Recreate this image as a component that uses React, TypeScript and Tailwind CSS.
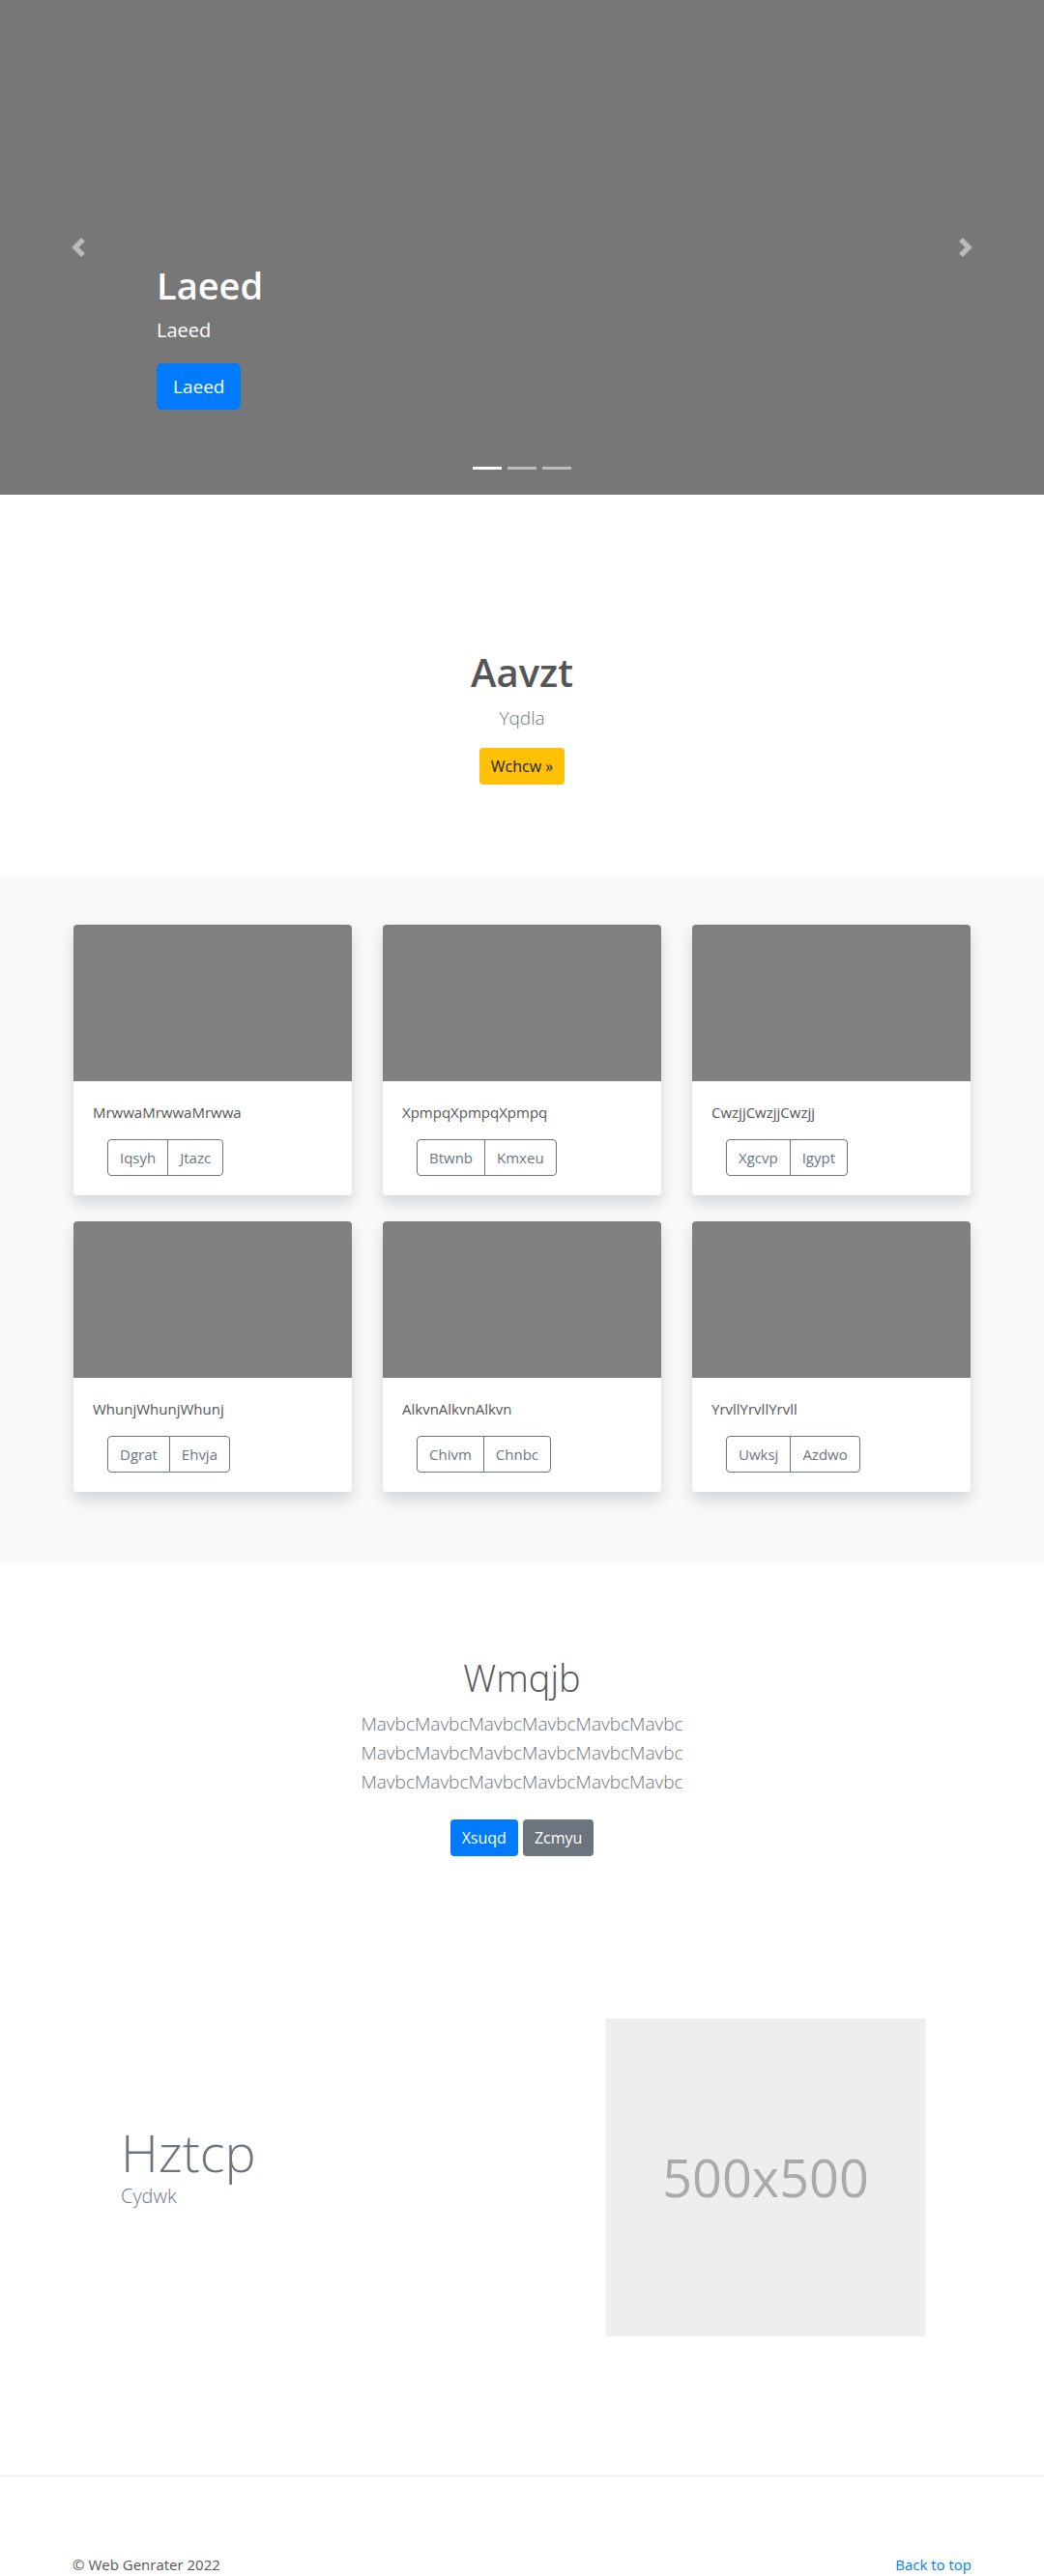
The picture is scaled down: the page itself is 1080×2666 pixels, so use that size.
// Landing page: carousel hero, intro, card grid, text block, feature row, footer

const CARDS = [
  { title: 'MrwwaMrwwaMrwwa', buttons: ['Iqsyh', 'Jtazc'] },
  { title: 'XpmpqXpmpqXpmpq', buttons: ['Btwnb', 'Kmxeu'] },
  { title: 'CwzjjCwzjjCwzjj', buttons: ['Xgcvp', 'Igypt'] },
  { title: 'WhunjWhunjWhunj', buttons: ['Dgrat', 'Ehvja'] },
  { title: 'AlkvnAlkvnAlkvn', buttons: ['Chivm', 'Chnbc'] },
  { title: 'YrvllYrvllYrvll', buttons: ['Uwksj', 'Azdwo'] },
];

const FONT = "font-['Open_Sans','Noto_Sans',sans-serif]";

function Chevron({ dir }: { dir: 'prev' | 'next' }) {
  return (
    <svg width="20" height="20" viewBox="0 0 8 8" fill="#fff" opacity="0.5">
      {dir === 'prev' ? (
        <path d="M5.25 0l-4 4 4 4 1.5-1.5L4.25 4l2.5-2.5L5.25 0z" />
      ) : (
        <path d="M2.75 0l-1.5 1.5L3.75 4l-2.5 2.5L2.75 8l4-4-4-4z" />
      )}
    </svg>
  );
}

function Card({ title, buttons }: { title: string; buttons: string[] }) {
  return (
    <div className="bg-white rounded-[4px] overflow-hidden shadow-[0_8px_16px_rgba(0,0,0,0.15)]">
      <div className="h-[162px] bg-[#808080]" />
      <div className="p-5">
        <p className="text-[15px] leading-6 text-[#555] mb-4">{title}</p>
        <div className="flex ml-[15px]">
          {buttons.map((b, i) => (
            <button
              key={b}
              className={`border border-[#6c757d] text-[#6c757d] text-[15px] leading-6 px-3 py-[6px] ${
                i === 0 ? 'rounded-l-[4px]' : '-ml-px rounded-r-[4px]'
              }`}
            >
              {b}
            </button>
          ))}
        </div>
      </div>
    </div>
  );
}

export default function App() {
  return (
    <div className={`${FONT} bg-white`}>
      {/* 캐러셀 */}
      <div className="relative h-[512px] bg-[#777] pl-[162px] pt-[271px]">
        <h1 className="text-[38px] leading-[48px] font-semibold text-white mb-2">Laeed</h1>
        <p className="text-[20px] leading-[30px] text-white mb-[19px]">Laeed</p>
        <button className="bg-[#007bff] text-white text-[19px] leading-[30px] px-4 py-[8px] border border-[#007bff] rounded-[5px]">
          Laeed
        </button>

        <div className="absolute left-0 top-0 h-full w-[162px] flex items-center justify-center">
          <Chevron dir="prev" />
        </div>
        <div className="absolute right-0 top-0 h-full w-[162px] flex items-center justify-center">
          <Chevron dir="next" />
        </div>

        <div className="absolute left-0 right-0 top-[483px] flex justify-center gap-[6px]">
          <span className="w-[30px] h-[3px] bg-white" />
          <span className="w-[30px] h-[3px] bg-[#bbb]" />
          <span className="w-[30px] h-[3px] bg-[#bbb]" />
        </div>
      </div>

      {/* 소개 */}
      <section className="pt-[160px] pb-[96px] flex flex-col items-center">
        <h2 className="text-[40px] leading-[48px] font-semibold text-[#555]">Aavzt</h2>
        <p className="text-[19px] leading-[30px] font-light text-[#6c757d] mt-2">Yqdla</p>
        <button className="mt-4 bg-[#ffc107] text-[#212529] text-[16px] leading-6 px-3 py-[7px] rounded-[4px]">
          Wchcw »
        </button>
      </section>

      {/* 카드 목록 */}
      <section className="bg-[#f8f9fa] pt-[49px] pb-[73px]">
        <div className="w-[928px] mx-auto grid grid-cols-3 gap-x-8 gap-y-[27px]">
          {CARDS.map((c) => (
            <Card key={c.title} title={c.title} buttons={c.buttons} />
          ))}
        </div>
      </section>

      {/* 텍스트 블록 */}
      <section className="pt-[95px] flex flex-col items-center">
        <h2 className="text-[38px] leading-[48px] font-light text-[#555] mb-[9px]">Wmqjb</h2>
        <div className="text-[19px] leading-[30px] font-light text-[#6c757d] text-center">
          <p>MavbcMavbcMavbcMavbcMavbcMavbc</p>
          <p>MavbcMavbcMavbcMavbcMavbcMavbc</p>
          <p>MavbcMavbcMavbcMavbcMavbcMavbc</p>
        </div>
        <div className="flex gap-[5px] mt-6">
          <button className="bg-[#007bff] text-white text-[16px] leading-6 px-3 py-[7px] rounded-[4px]">Xsuqd</button>
          <button className="bg-[#6c757d] text-white text-[16px] leading-6 px-3 py-[7px] rounded-[4px]">Zcmyu</button>
        </div>
      </section>

      {/* 특징 */}
      <section className="pt-[168px] pb-[144px]">
        <div className="w-[930px] mx-auto flex items-center">
          <div className="flex-1 pl-[50px] pb-[24px]">
            <h2 className="text-[54px] leading-[62px] font-light text-[#6c757d]">Hztcp</h2>
            <p className="text-[20px] leading-[30px] font-light text-[#6c757d]">Cydwk</p>
          </div>
          <div className="w-[330px] h-[329px] bg-[#eee] mr-[48px] flex items-center justify-center">
            <span className="text-[54px] text-[#aaa]">500x500</span>
          </div>
        </div>
      </section>

      {/* 푸터 */}
      <footer className="border-t border-[#e5e5e5] pt-[79px] pb-px">
        <div className="w-[930px] mx-auto flex justify-between text-[15px] leading-6">
          <p className="text-[#555]">© Web Genrater 2022</p>
          <a href="#" className="text-[#007bff]">Back to top</a>
        </div>
      </footer>
    </div>
  );
}
